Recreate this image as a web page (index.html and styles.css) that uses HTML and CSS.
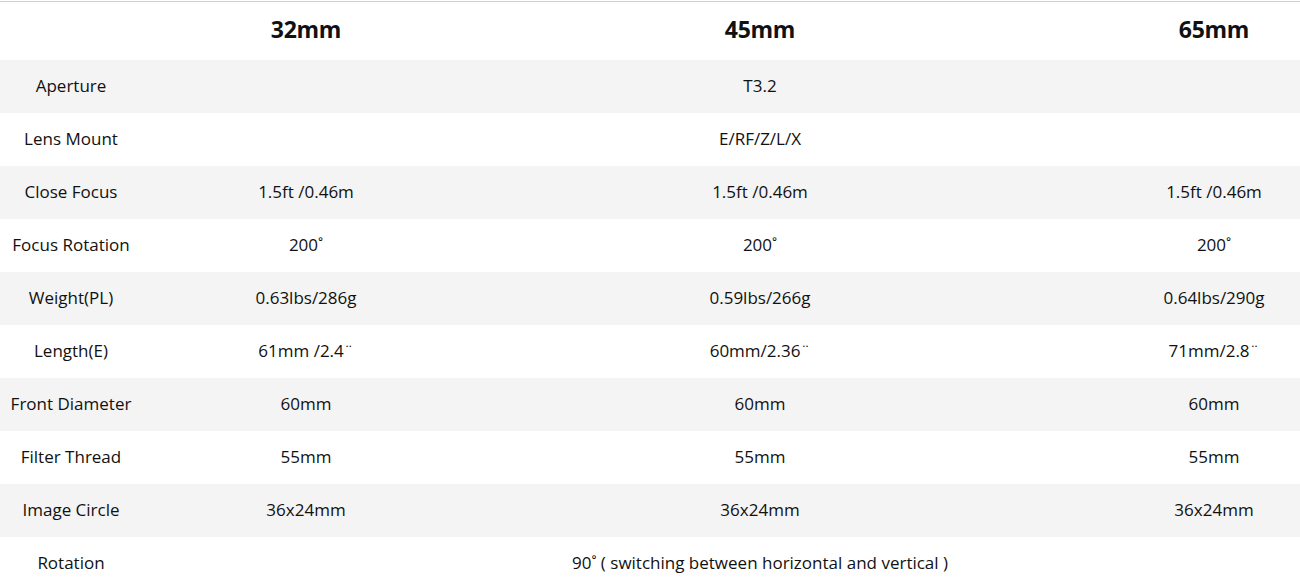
FILE: index.html
```html
<!DOCTYPE html>
<html lang="en">
<head>
<meta charset="utf-8">
<title>Lens Specifications</title>
<link rel="stylesheet" href="styles.css">
</head>
<body>
<div class="wrap">
<table class="specs">
  <colgroup>
    <col class="c-label">
    <col class="c-side">
    <col class="c-mid">
    <col class="c-side">
  </colgroup>
  <thead>
    <tr><th></th><th>32mm</th><th>45mm</th><th>65mm</th></tr>
  </thead>
  <tbody>
    <tr><td class="label">Aperture</td><td colspan="3">T3.2</td></tr>
    <tr><td class="label">Lens Mount</td><td colspan="3">E/RF/Z/L/X</td></tr>
    <tr><td class="label">Close Focus</td><td>1.5ft /0.46m</td><td>1.5ft /0.46m</td><td>1.5ft /0.46m</td></tr>
    <tr><td class="label">Focus Rotation</td><td>200˚</td><td>200˚</td><td>200˚</td></tr>
    <tr><td class="label">Weight(PL)</td><td>0.63lbs/286g</td><td>0.59lbs/266g</td><td>0.64lbs/290g</td></tr>
    <tr><td class="label">Length(E)</td><td>61mm /2.4¨</td><td>60mm/2.36¨</td><td>71mm/2.8¨</td></tr>
    <tr><td class="label">Front Diameter</td><td>60mm</td><td>60mm</td><td>60mm</td></tr>
    <tr><td class="label">Filter Thread</td><td>55mm</td><td>55mm</td><td>55mm</td></tr>
    <tr><td class="label">Image Circle</td><td>36x24mm</td><td>36x24mm</td><td>36x24mm</td></tr>
    <tr><td class="label">Rotation</td><td colspan="3">90˚ ( switching between horizontal and vertical )</td></tr>
  </tbody>
</table>
</div>
</body>
</html>
```

FILE: styles.css
```css
html, body {
  margin: 0;
  padding: 0;
  background: #ffffff;
}
body {
  padding-top: 1px;
  font-family: "Open Sans", "Liberation Sans", sans-serif;
  color: #111111;
  overflow: hidden;
}
.wrap {
  width: 1300px;
  overflow: hidden;
}
.specs {
  width: 1378px;
  table-layout: fixed;
  border-collapse: collapse;
  border-top: 1px solid #cfcfcf;
}
.c-label { width: 142px; }
.c-side { width: 328px; }
.c-mid { width: 580px; }
.specs th,
.specs td {
  box-sizing: border-box;
  text-align: center;
  vertical-align: middle;
  white-space: nowrap;
}
.specs th {
  height: 58px;
  padding: 0 0 3px;
  font-size: 23px;
  font-weight: 700;
  letter-spacing: -0.3px;
}
.specs td {
  height: 53px;
  padding: 0 0 2px;
  font-size: 17px;
  font-weight: 500;
}
.specs tbody tr:nth-child(odd) {
  background: #f4f4f4;
}
```
